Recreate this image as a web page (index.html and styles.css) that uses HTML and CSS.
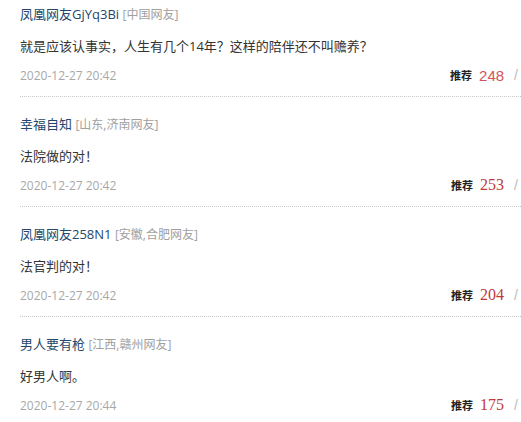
FILE: index.html
```html
<!DOCTYPE html>
<html lang="zh-CN">
<head>
  <meta charset="UTF-8">
  <meta name="viewport" content="width=device-width, initial-scale=1.0">
  <title>评论</title>
  <link rel="stylesheet" href="styles.css">
</head>
<body>
  <div class="comment-list">
    <div class="comment">
      <div class="user"><span class="name">凤凰网友GjYq3Bi</span> <span class="loc">[中国网友]</span></div>
      <div class="text">就是应该认事实，人生有几个14年？这样的陪伴还不叫赡养？</div>
      <div class="meta">
        <span class="date">2020-12-27 20:42</span>
        <span class="vote"><b>推荐</b><span class="num sans">248</span><span class="slash">/</span></span>
      </div>
    </div>
    <div class="comment">
      <div class="user"><span class="name">幸福自知</span> <span class="loc">[山东,济南网友]</span></div>
      <div class="text">法院做的对！</div>
      <div class="meta">
        <span class="date">2020-12-27 20:42</span>
        <span class="vote"><b>推荐</b><span class="num">253</span><span class="slash">/</span></span>
      </div>
    </div>
    <div class="comment">
      <div class="user"><span class="name">凤凰网友258N1</span> <span class="loc">[安徽,合肥网友]</span></div>
      <div class="text">法官判的对！</div>
      <div class="meta">
        <span class="date">2020-12-27 20:42</span>
        <span class="vote"><b>推荐</b><span class="num">204</span><span class="slash">/</span></span>
      </div>
    </div>
    <div class="comment">
      <div class="user"><span class="name">男人要有枪</span> <span class="loc">[江西,赣州网友]</span></div>
      <div class="text">好男人啊。</div>
      <div class="meta">
        <span class="date">2020-12-27 20:44</span>
        <span class="vote"><b>推荐</b><span class="num">175</span><span class="slash">/</span></span>
      </div>
    </div>
  </div>
</body>
</html>
```

FILE: styles.css
```css
body {
  margin: 0;
  padding: 0;
  background: #fff;
  font-family: "Open Sans", "Noto Sans CJK SC", sans-serif;
  overflow: hidden;
}

.comment-list {
  padding-left: 20px;
}

.comment {
  padding: 17px 0 11px;
  border-bottom: 1px dotted #c8c8c8;
}

.comment:first-child {
  padding-top: 4px;
}

.user {
  height: 20px;
  line-height: 20px;
  font-size: 13px;
}

.name {
  color: #24476b;
}

.loc {
  color: #a0a0a0;
  font-size: 12px;
}

.text {
  margin-top: 12px;
  height: 20px;
  line-height: 20px;
  font-size: 13px;
  color: #333;
}

.meta {
  margin-top: 9px;
  height: 20px;
  display: flex;
  justify-content: space-between;
  align-items: center;
}

.date {
  font-size: 12px;
  color: #a8a8a8;
}

.vote {
  display: flex;
  align-items: center;
  padding-right: 3px;
}

.vote b {
  font-size: 11px;
  color: #222;
  font-family: "Noto Sans CJK SC", sans-serif;
  margin-right: 7px;
}

.num {
  font-family: "Liberation Serif", serif;
  font-size: 16px;
  color: #c0393d;
}

.num.sans {
  font-family: "Liberation Sans", sans-serif;
  font-size: 15px;
  color: #d2545a;
}

.slash {
  font-family: "Liberation Sans", sans-serif;
  font-size: 14px;
  color: #bbb;
  margin-left: 10px;
}
```
